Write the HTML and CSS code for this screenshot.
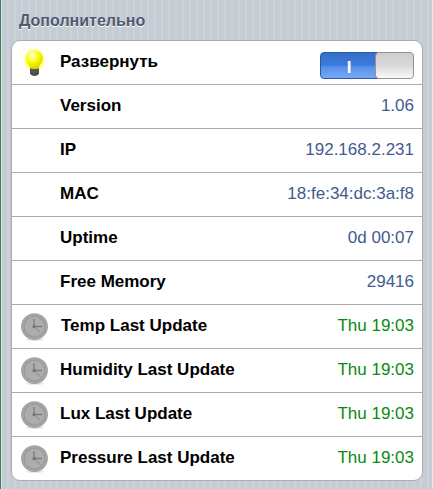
FILE: index.html
```html
<!DOCTYPE html>
<html lang="ru">
<head>
<meta charset="utf-8">
<title>Дополнительно</title>
<link rel="stylesheet" href="styles.css">
</head>
<body>
<svg class="defs" width="0" height="0" aria-hidden="true">
  <defs>
    <radialGradient id="face" cx=".5" cy=".5" r=".5">
      <stop offset="0" stop-color="#adadad"/>
      <stop offset=".68" stop-color="#adadad"/>
      <stop offset=".76" stop-color="#999"/>
      <stop offset=".88" stop-color="#a6a6a6"/>
      <stop offset="1" stop-color="#a0a0a0"/>
    </radialGradient>
    <radialGradient id="glow">
      <stop offset=".65" stop-color="#ffff20" stop-opacity=".9"/>
      <stop offset="1" stop-color="#ffff60" stop-opacity="0"/>
    </radialGradient>
    <radialGradient id="glass" cx=".38" cy=".25" r=".75">
      <stop offset="0" stop-color="#ffffe8"/>
      <stop offset=".25" stop-color="#ffff70"/>
      <stop offset=".55" stop-color="#fafa00"/>
      <stop offset="1" stop-color="#d0d000"/>
    </radialGradient>
    <symbol id="clock" viewBox="0 0 30 30">
      <ellipse cx="15" cy="27.5" rx="9" ry="1.500" fill="#e4e4e4"/>
      <circle cx="14.500" cy="14.600" r="13.400" fill="url(#face)"/>
      <path d="M14 7v7.500h8" fill="none" stroke="#7c7c7c" stroke-width="1.300"/>
      <path d="M14.500 15l5.500 5.500" stroke="#8a8a8a" stroke-width="1"/>
      <circle cx="14" cy="14.700" r="1.600" fill="#757575"/>
    </symbol>
  </defs>
</svg>
<main class="page">
  <h2 class="title">Дополнительно</h2>
  <ul class="list">
    <li class="row">
      <svg class="icon" viewBox="0 0 30 30">
        <ellipse cx="14.300" cy="11.800" rx="11.500" ry="12.500" fill="url(#glow)"/>
        <path d="M10 20h9v5.500q-1.500 2.500-4.500 2.500T10 25.500z" fill="#484848"/>
        <path d="M10.500 21.800h8.200M10.500 24h8.200" stroke="#777" stroke-width=".6"/>
        <path d="M14.300 2.500C9.500 2.500 6 5.800 6 10.200c0 4.500 3.800 5.500 4.300 10.300q4.200 1.200 8.400 0c.5-4.800 4.100-5.800 4.100-10.300 0-4.400-3.500-7.700-8.500-7.700z" fill="url(#glass)"/>
      </svg>
      <span class="label">Развернуть</span>
      <span class="switch"><span class="on">I</span><span class="knob"></span></span>
    </li>
    <li class="row"><span class="icon"></span><span class="label">Version</span><span class="value">1.06</span></li>
    <li class="row"><span class="icon"></span><span class="label">IP</span><span class="value">192.168.2.231</span></li>
    <li class="row"><span class="icon"></span><span class="label">MAC</span><span class="value">18:fe:34:dc:3a:f8</span></li>
    <li class="row"><span class="icon"></span><span class="label">Uptime</span><span class="value">0d 00:07</span></li>
    <li class="row"><span class="icon"></span><span class="label">Free Memory</span><span class="value">29416</span></li>
    <li class="row"><svg class="icon"><use href="#clock"/></svg><span class="label shifted">Temp Last Update</span><span class="value time">Thu 19:03</span></li>
    <li class="row"><svg class="icon"><use href="#clock"/></svg><span class="label">Humidity Last Update</span><span class="value time">Thu 19:03</span></li>
    <li class="row"><svg class="icon"><use href="#clock"/></svg><span class="label">Lux Last Update</span><span class="value time">Thu 19:03</span></li>
    <li class="row"><svg class="icon"><use href="#clock"/></svg><span class="label">Pressure Last Update</span><span class="value time">Thu 19:03</span></li>
  </ul>
</main>
</body>
</html>
```
FILE: styles.css
```css
* { box-sizing: border-box; }
body {
  margin: 0;
  overflow: hidden;
  font-family: "Liberation Sans", Arial, sans-serif;
}
.defs { position: absolute; }
.page {
  height: 489px;
  padding: 11px 9px 0 9px;
  border-left: 1px solid #38815b;
  border-right: 1px solid #e6eaed;
  box-shadow: inset 1px 0 #dbe3e6;
  background: repeating-linear-gradient(90deg, #cbd2d8 0 2px, #c5ccd4 2px 7px) border-box;
}
.title {
  margin: 0 0 9px 9px;
  font-size: 16px;
  line-height: 20px;
  font-weight: bold;
  color: #4f5972;
  text-shadow: 0 1px 0 #fff;
}
.list {
  list-style: none;
  width: 412px;
  margin: 0 0 0 1px;
  padding: 0;
  background: #fff;
  border: 1px solid #a9abae;
  border-radius: 9px;
}
.row {
  display: flex;
  align-items: flex-start;
  height: 44px;
  padding: 7px 8px 0;
  border-bottom: 1px solid #a9abae;
}
.row:last-child { height: 43px; border-bottom: 0; }
.icon { width: 30px; height: 30px; flex: none; }
.label {
  margin: 4px 0 0 10px;
  font-size: 17px;
  line-height: 20px;
  font-weight: bold;
  color: #000;
}
.shifted { margin-left: 11px; }
.value {
  margin: 4px 0 0 auto;
  font-size: 17px;
  line-height: 20px;
  color: #3f5b92;
}
.time { color: #098a10; }
.switch {
  display: flex;
  width: 94px;
  height: 27px;
  margin: 4px 0 0 auto;
}
.on {
  width: 58px;
  padding: 2px 0 0 0;
  border: 1px solid #2858a8;
  border-radius: 4px 0 0 4px;
  background: linear-gradient(#3570c8, #3c7cdd 50%, #5790ea 55%, #78a8f4);
  color: #fff;
  font-weight: bold;
  font-size: 17px;
  line-height: 26px;
  text-align: center;
}
.knob {
  width: 39px;
  margin-left: -3px;
  border: 1px solid #929292;
  border-radius: 4px;
  background: linear-gradient(#cecece, #d8d8d8 50%, #f9f9f9);
}
```
